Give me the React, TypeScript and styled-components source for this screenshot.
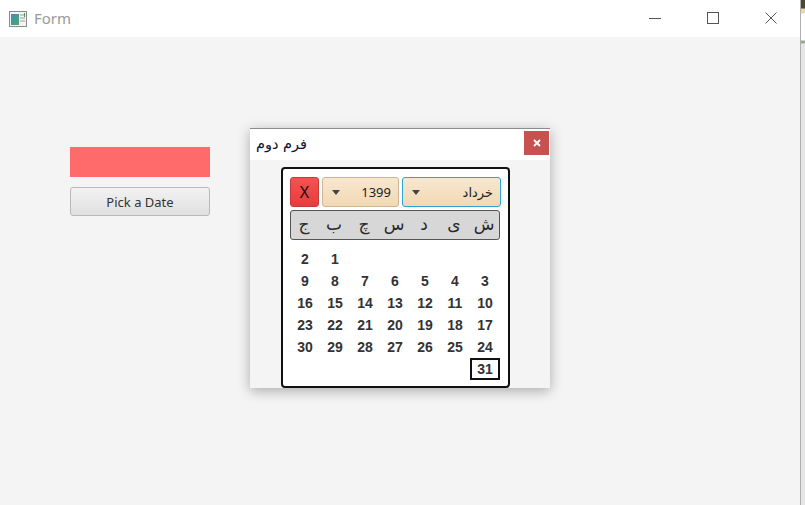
import styled, { createGlobalStyle } from "styled-components";

const GlobalStyle = createGlobalStyle`
  html, body {
    margin: 0;
    padding: 0;
    background: #f4f4f4;
    font-family: "Noto Sans", "Liberation Sans", sans-serif;
  }
`;

const Screen = styled.div`
  display: flex;
  width: 805px;
  height: 505px;
  position: relative;
  overflow: hidden;
`;

const Window = styled.div`
  width: 800px;
  height: 505px;
  display: flex;
  flex-direction: column;
`;

const EdgeStrip = styled.div`
  width: 5px;
  height: 505px;
  background: linear-gradient(
    to bottom,
    #4b4a2c 0px,
    #4b4a2c 8px,
    #e9d7a6 9px,
    #e9d7a6 13px,
    #ffffff 14px,
    #ffffff 40px,
    #9aa88a 41px,
    #9aa88a 43px,
    #e6e6e6 44px,
    #e6e6e6 100%
  );
  border-left: 1px solid #b0b0b0;
  box-sizing: border-box;
`;

const TitleBar = styled.div`
  height: 37px;
  background: #ffffff;
  display: flex;
  align-items: center;
  padding-left: 9px;
`;

const TitleText = styled.span`
  margin-left: 7px;
  font-size: 15px;
  color: #9a9a9a;
  margin-top: -1px;
`;

const Controls = styled.div`
  margin-left: auto;
  display: flex;
  height: 100%;
`;

const ControlButton = styled.div`
  width: 58px;
  height: 100%;
  display: flex;
  align-items: center;
  justify-content: center;
  padding-bottom: 2px;
  box-sizing: border-box;
`;

const Content = styled.div`
  flex: 1;
  background: #f4f4f4;
  padding: 110px 0 0 70px;
  display: flex;
  flex-direction: column;
  gap: 10px;
`;

const ColorBar = styled.div`
  width: 140px;
  height: 30px;
  background: #ff6b6b;
`;

const PickButton = styled.button`
  width: 140px;
  height: 29px;
  border: 1px solid #b9b9b9;
  border-radius: 3px;
  background: linear-gradient(to bottom, #f2f2f2, #e0e0e0);
  font-family: "Noto Sans", "Liberation Sans", sans-serif;
  font-size: 13px;
  color: #333;
  padding: 0;
  cursor: default;
`;

/* the second form floats over the first one, like a window on the desktop */
const Dialog = styled.div`
  position: absolute;
  left: 250px;
  top: 128px;
  width: 300px;
  height: 260px;
  background: #f4f4f4;
  border-top: 1px solid #8c8c8c;
  box-shadow: 0 3px 12px rgba(0, 0, 0, 0.3);
  display: flex;
  flex-direction: column;
  box-sizing: border-box;
`;

const DialogTitle = styled.div`
  height: 31px;
  background: #ffffff;
  display: flex;
  align-items: center;
  padding-left: 6px;
  padding-right: 1px;
`;

const DialogTitleText = styled.span`
  font-family: "DejaVu Sans", "Noto Sans", sans-serif;
  font-size: 14.5px;
  color: #101030;
  margin-top: -1px;
`;

const DialogClose = styled.div`
  margin-left: auto;
  width: 25px;
  height: 24px;
  margin-top: 2px;
  background: #c75050;
  display: flex;
  align-items: center;
  justify-content: center;
  align-self: flex-start;
`;

const DialogBody = styled.div`
  flex: 1;
  padding: 7px 0 0 31px;
  display: flex;
`;

const Calendar = styled.div`
  width: 229px;
  height: 221px;
  box-sizing: border-box;
  background: #ffffff;
  border: 2px solid #111;
  border-radius: 4px;
  padding: 8px 0 0 7px;
  display: flex;
  flex-direction: column;
`;

const TopRow = styled.div`
  display: flex;
  gap: 3px;
  height: 30px;
`;

const CloseCal = styled.div`
  width: 29px;
  height: 30px;
  box-sizing: border-box;
  border: 1px solid #c83a3a;
  border-radius: 3px;
  background: linear-gradient(to bottom, #f45252, #e83c3c);
  color: #111;
  font-family: "Noto Sans", "Liberation Sans", sans-serif;
  font-size: 16px;
  display: flex;
  align-items: center;
  justify-content: center;
`;

const Combo = styled.div<{ $w: number; $focused?: boolean }>`
  width: ${(p) => p.$w}px;
  height: 30px;
  box-sizing: border-box;
  border: 1px solid ${(p) => (p.$focused ? "#2aa4dc" : "#cbb592")};
  border-radius: 3px;
  background: linear-gradient(to bottom, #f8e7cf, #f1d9b4);
  display: flex;
  align-items: center;
  padding: 0 7px 0 9px;
  gap: 6px;
`;

const Arrow = styled.div`
  width: 0;
  height: 0;
  border-left: 4px solid transparent;
  border-right: 4px solid transparent;
  border-top: 5px solid #444;
`;

const ComboText = styled.span<{ $fa?: boolean }>`
  margin-left: auto;
  font-family: ${(p) =>
    p.$fa ? `"DejaVu Sans", "Noto Sans", sans-serif` : `"Noto Sans", "Liberation Sans", sans-serif`};
  font-size: 13px;
  color: #222;
  direction: ${(p) => (p.$fa ? "rtl" : "ltr")};
`;

const WeekHeader = styled.div`
  margin-top: 3px;
  width: 210px;
  height: 30px;
  box-sizing: border-box;
  background: #d7d7d7;
  border: 1px solid #555;
  border-radius: 3px;
  display: grid;
  grid-template-columns: repeat(7, 30px);
  direction: rtl;
`;

const WeekDay = styled.div`
  display: flex;
  align-items: center;
  justify-content: center;
  font-family: "DejaVu Sans", "Noto Sans", sans-serif;
  font-size: 17px;
  color: #2a2a2a;
  padding-bottom: 3px;
`;

const DayGrid = styled.div`
  margin-top: 8px;
  width: 210px;
  display: grid;
  grid-template-columns: repeat(7, 30px);
  grid-auto-rows: 22px;
  direction: rtl;
`;

const Day = styled.div<{ $selected?: boolean }>`
  display: flex;
  align-items: center;
  justify-content: center;
  box-sizing: border-box;
  font-family: "Liberation Sans", Arial, sans-serif;
  font-weight: bold;
  font-size: 14px;
  color: #333;
  border: ${(p) => (p.$selected ? "2px solid #111" : "none")};
`;

const weekDays = ["ش", "ی", "د", "س", "چ", "ب", "ج"];
const days: (number | null)[] = [
  null, null, null, null, null,
  ...Array.from({ length: 31 }, (_, i) => i + 1),
];

const AppIcon = () => (
  <svg width="18" height="16" viewBox="0 0 18 16">
    <defs>
      <linearGradient id="ic" x1="0" y1="0" x2="1" y2="1">
        <stop offset="0" stopColor="#3f8fb8" />
        <stop offset="1" stopColor="#4aa86a" />
      </linearGradient>
    </defs>
    <rect x="0.5" y="0.5" width="17" height="15" fill="#f4f4f4" stroke="#8a8a8a" />
    <rect x="2" y="3" width="8" height="11" fill="url(#ic)" />
    <rect x="11" y="3" width="5" height="2" fill="#c8c8c8" />
    <rect x="11" y="6" width="5" height="2" fill="#c8c8c8" />
    <rect x="11" y="9" width="5" height="2" fill="#c8c8c8" />
    <rect x="15" y="2" width="1" height="4" fill="#3c9a4a" />
  </svg>
);

export default function App() {
  return (
    <>
      <GlobalStyle />
      <Screen>
        <Window>
          <TitleBar>
            <AppIcon />
            <TitleText>Form</TitleText>
            <Controls>
              <ControlButton>
                <svg width="12" height="12" viewBox="0 0 12 12">
                  <line x1="0" y1="6.5" x2="12" y2="6.5" stroke="#555" strokeWidth="1" />
                </svg>
              </ControlButton>
              <ControlButton>
                <svg width="12" height="12" viewBox="0 0 12 12">
                  <rect x="0.5" y="0.5" width="11" height="11" fill="none" stroke="#555" strokeWidth="1" />
                </svg>
              </ControlButton>
              <ControlButton>
                <svg width="12" height="12" viewBox="0 0 12 12">
                  <path d="M0.5 0.5 L11.5 11.5 M11.5 0.5 L0.5 11.5" stroke="#555" strokeWidth="1" />
                </svg>
              </ControlButton>
            </Controls>
          </TitleBar>
          <Content>
            <ColorBar />
            <PickButton>Pick a Date</PickButton>
          </Content>
        </Window>
        <EdgeStrip />

        <Dialog>
          <DialogTitle>
            <DialogTitleText dir="rtl">فرم دوم</DialogTitleText>
            <DialogClose>
              <svg width="8" height="8" viewBox="0 0 8 8">
                <path d="M1 1 L7 7 M7 1 L1 7" stroke="#fff" strokeWidth="1.8" />
              </svg>
            </DialogClose>
          </DialogTitle>
          <DialogBody>
            <Calendar>
              <TopRow>
                <CloseCal>X</CloseCal>
                <Combo $w={77}>
                  <Arrow />
                  <ComboText>1399</ComboText>
                </Combo>
                <Combo $w={99} $focused>
                  <Arrow />
                  <ComboText $fa>خرداد</ComboText>
                </Combo>
              </TopRow>
              <WeekHeader>
                {weekDays.map((d, i) => (
                  <WeekDay key={i}>{d}</WeekDay>
                ))}
              </WeekHeader>
              <DayGrid>
                {days.map((d, i) => (
                  <Day key={i} $selected={d === 31}>
                    {d ?? ""}
                  </Day>
                ))}
              </DayGrid>
            </Calendar>
          </DialogBody>
        </Dialog>
      </Screen>
    </>
  );
}
